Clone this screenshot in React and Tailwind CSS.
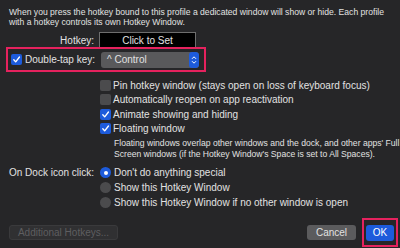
import React from "react";

const font = { fontFamily: '"Liberation Sans", Arial, sans-serif' };

function Check({ checked }) {
  return checked ? (
    <div className="w-[11px] h-[11px] rounded-[2px] bg-[#1d5bdb] flex items-center justify-center shrink-0">
      <svg width="9" height="9" viewBox="0 0 10 10">
        <path d="M2 5.3 L4.1 7.6 L8.3 2.2" stroke="white" strokeWidth="1.5" fill="none" strokeLinecap="round" strokeLinejoin="round" />
      </svg>
    </div>
  ) : (
    <div className="w-[11px] h-[11px] rounded-[2px] bg-[#4b4b4d] shrink-0" />
  );
}

function Radio({ on }) {
  return on ? (
    <div className="w-[11px] h-[11px] rounded-full bg-[#1d5bdb] flex items-center justify-center shrink-0">
      <div className="w-[4px] h-[4px] rounded-full bg-white" />
    </div>
  ) : (
    <div className="w-[11px] h-[11px] rounded-full bg-[#4b4b4d] shrink-0" />
  );
}

export default function App() {
  return (
    <div
      className="w-[400px] h-[248px] bg-[#262628] text-[#e2e2e2] text-[10px] flex flex-col overflow-hidden whitespace-nowrap"
      style={font}
    >
      <div className="pl-[9px] pt-[7px] text-[8.6px] leading-[10px]">
        <p>When you press the hotkey bound to this profile a dedicated window will show or hide. Each profile</p>
        <p>with a hotkey controls its own Hotkey Window.</p>
      </div>

      <div className="flex items-center mt-[5px] h-[17px]">
        <div className="w-[95px] text-right pr-[1px]">Hotkey:</div>
        <div className="ml-[4px] w-[97px] h-[17px] bg-black border border-[#6e6e6e] flex items-center justify-center">
          Click to Set
        </div>
      </div>

      <div className="ml-[6px] mt-[-2px] w-[200px] h-[25px] border-2 border-[#e5225e] flex items-center">
        <div className="ml-[3px]"><Check checked /></div>
        <div className="ml-[3px] w-[72px]">Double-tap key:</div>
        <div className="ml-[4px] w-[98px] h-[16px] rounded-[3px] bg-[#59595b] flex items-center justify-between overflow-hidden">
          <span className="pl-[6px]">^ Control</span>
          <div className="w-[10px] h-[16px] rounded-[3px] bg-[#1d5bdb] flex items-center justify-center">
            <svg width="6" height="10" viewBox="0 0 6 10">
              <path d="M1 3.8 L3 1.8 L5 3.8 M1 6.2 L3 8.2 L5 6.2" stroke="white" strokeWidth="1" fill="none" />
            </svg>
          </div>
        </div>
      </div>

      <div className="flex flex-col pl-[100px] mt-[6px]">
        <div className="flex items-center gap-[2px] h-[14.5px]"><Check /><span>Pin hotkey window (stays open on loss of keyboard focus)</span></div>
        <div className="flex items-center gap-[2px] h-[14.5px]"><Check /><span>Automatically reopen on app reactivation</span></div>
        <div className="flex items-center gap-[2px] h-[14.5px]"><Check checked /><span>Animate showing and hiding</span></div>
        <div className="flex items-center gap-[2px] h-[14.5px]"><Check checked /><span>Floating window</span></div>
        <div className="pl-[14px] text-[8.6px] leading-[11px] mt-[2px]">
          <p>Floating windows overlap other windows and the dock, and other apps' Full</p>
          <p>Screen windows (if the Hotkey Window's Space is set to All Spaces).</p>
        </div>
      </div>

      <div className="flex mt-[5px]">
        <div className="w-[100px] pl-[9px] h-[15px] flex items-center">On Dock icon click:</div>
        <div className="flex flex-col">
          <div className="flex items-center gap-[3px] h-[15px]"><Radio on /><span>Don't do anything special</span></div>
          <div className="flex items-center gap-[3px] h-[15px]"><Radio /><span>Show this Hotkey Window</span></div>
          <div className="flex items-center gap-[3px] h-[15px]"><Radio /><span>Show this Hotkey Window if no other window is open</span></div>
        </div>
      </div>

      <div className="flex items-center mt-[8px] h-[29px] pl-[9px]">
        <div className="w-[109px] h-[15px] rounded-[3px] bg-[#303032] border border-[#3a3a3c] text-[#5e5e60] flex items-center justify-center">
          Additional Hotkeys...
        </div>
        <div className="ml-auto w-[49px] h-[15px] rounded-[3px] bg-[#5b5b5d] flex items-center justify-center">
          Cancel
        </div>
        <div className="ml-[6px] mr-[2px] w-[36px] h-[29px] border-2 border-[#e5225e] flex items-center justify-center">
          <div className="w-[28px] h-[16px] rounded-[3px] bg-[#1d5bdb] text-white flex items-center justify-center">OK</div>
        </div>
      </div>
    </div>
  );
}
